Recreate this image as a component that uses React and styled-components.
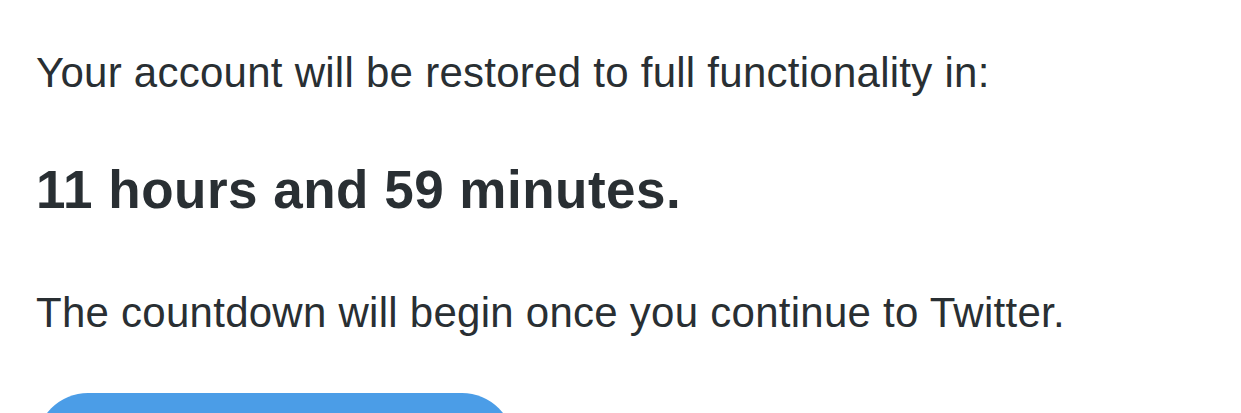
import React from 'react';
import styled, { createGlobalStyle } from 'styled-components';

const GlobalStyle = createGlobalStyle`
  html, body {
    margin: 0;
    padding: 0;
    background: #ffffff;
  }
  body {
    font-family: "Liberation Sans", Arial, Helvetica, sans-serif;
    color: #292f33;
  }
`;

const Page = styled.div`
  display: flex;
  flex-direction: column;
  align-items: flex-start;
  padding: 49px 36px 0 36px;
`;

const Line = styled.p`
  margin: 0 0 ${({ gap }) => gap}px 0;
  font-size: 42px;
  line-height: 48px;
  font-weight: 400;
  letter-spacing: 0.26px;
`;

const Countdown = styled.p`
  margin: 0 0 69px 0;
  font-size: 53px;
  line-height: 60px;
  font-weight: 700;
  letter-spacing: 0.5px;
`;

const Button = styled.button`
  width: 478px;
  height: 104px;
  border: none;
  border-radius: 52px;
  background: #4b9de7;
  cursor: pointer;
`;

const App = () => {
  return (
    <>
      <GlobalStyle />
      <Page>
        <Line gap={63}>Your account will be restored to full functionality in:</Line>
        <Countdown>11 hours and 59 minutes.</Countdown>
        <Line gap={56}>The countdown will begin once you continue to Twitter.</Line>
        <Button aria-label="Continue to Twitter" />
      </Page>
    </>
  );
};

export default App;
